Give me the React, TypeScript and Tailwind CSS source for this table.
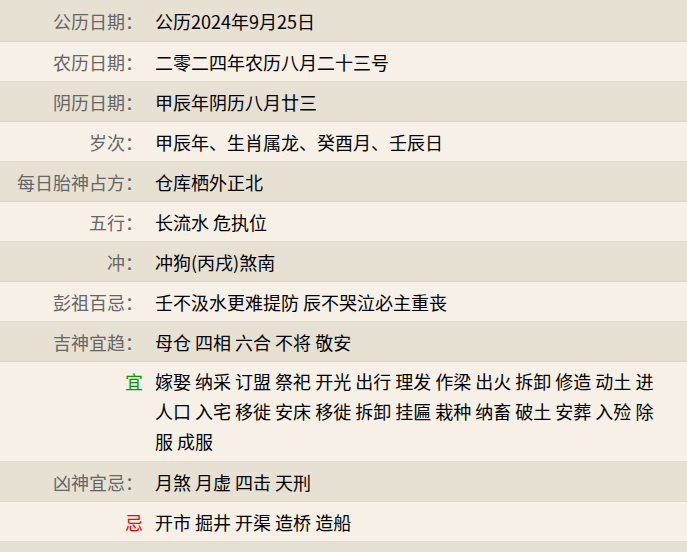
import React from "react";

type Row = { label: string; value: string; labelClass?: string; multi?: boolean };

const rows: Row[] = [
  { label: "公历日期：", value: "公历2024年9月25日" },
  { label: "农历日期：", value: "二零二四年农历八月二十三号" },
  { label: "阴历日期：", value: "甲辰年阴历八月廿三" },
  { label: "岁次：", value: "甲辰年、生肖属龙、癸酉月、壬辰日" },
  { label: "每日胎神占方：", value: "仓库栖外正北" },
  { label: "五行：", value: "长流水 危执位" },
  { label: "冲：", value: "冲狗(丙戌)煞南" },
  { label: "彭祖百忌：", value: "壬不汲水更难提防 辰不哭泣必主重丧" },
  { label: "吉神宜趋：", value: "母仓 四相 六合 不将 敬安" },
  {
    label: "宜",
    labelClass: "text-[#009900]",
    multi: true,
    value:
      "嫁娶 纳采 订盟 祭祀 开光 出行 理发 作梁 出火 拆卸 修造 动土 进人口 入宅 移徙 安床 移徙 拆卸 挂匾 栽种 纳畜 破土 安葬 入殓 除服 成服",
  },
  { label: "凶神宜忌：", value: "月煞 月虚 四击 天刑" },
  { label: "忌", labelClass: "text-[#ff0000]", value: "开市 掘井 开渠 造桥 造船" },
];

export default function App() {
  return (
    <div
      className="w-[687px] h-[552px] overflow-hidden bg-[#e6e1d3] text-[18px] leading-[30px] text-black"
      style={{ fontFamily: '"Noto Sans CJK SC", "Noto Sans", sans-serif' }}
    >
      {rows.map((r, i) => {
        const bg = i % 2 === 0 ? "bg-[#e6e1d3]" : "bg-[#f6f0e6]";
        const h = r.multi ? "pt-[4px] pb-[5px] items-start" : i === 0 ? "h-[42px] items-center" : "h-[40px] items-center";
        return (
          <div key={i} className={`flex ${h} ${bg} border-b border-[#dcdadb]`}>
            <div className={`w-[143px] shrink-0 text-right ${r.labelClass ?? "text-[#666666]"}`}>{r.label}</div>
            <div className="flex-1 pl-[12px] pr-[20px]">{r.value}</div>
          </div>
        );
      })}
      <div className="h-[20px] bg-[#e6e1d3]" />
    </div>
  );
}
